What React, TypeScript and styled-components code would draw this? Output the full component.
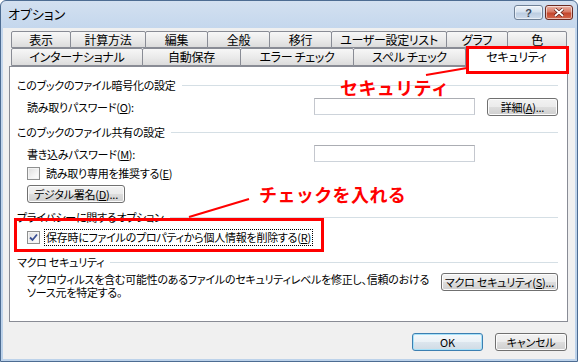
import React from 'react';
import styled, { createGlobalStyle } from 'styled-components';

const UI_FONT = `"Noto Sans CJK JP", "Noto Sans", sans-serif`;

const GlobalStyle = createGlobalStyle`
  html, body { margin: 0; padding: 0; background: #fff; }
  body { font-family: ${UI_FONT}; font-size: 12px; color: #000; }
  * { box-sizing: border-box; }
`;

const Window = styled.div`
  position: relative;
  width: 578px;
  height: 362px;
  display: flex;
  flex-direction: column;
  background: linear-gradient(180deg, #d3e0f0 0px, #c4d7ed 28px, #bcd2ea 100%);
  border: 1px solid #4d6c92;
  border-radius: 6px 6px 0 0;
  overflow: hidden;
  font-family: ${UI_FONT};
  font-size: 11px;
  letter-spacing: -0.25px;
  font-feature-settings: "palt";
`;

const TitleBar = styled.div`
  height: 27px;
  display: flex;
  align-items: flex-start;
  padding: 4px 4px 0 7px;
`;

const Title = styled.div`
  flex: 1;
  font-size: 13px;
  letter-spacing: 0;
  line-height: 18px;
  color: #000;
`;

const CaptionButton = styled.div<{ $w: number; $close?: boolean }>`
  width: ${p => p.$w}px;
  height: 15px;
  margin-left: 2px;
  border: 1px solid ${p => (p.$close ? '#6b2a21' : '#6f8197')};
  border-radius: 3px;
  display: flex;
  align-items: center;
  justify-content: center;
  background: ${p =>
    p.$close
      ? 'linear-gradient(180deg, #eab1a4 0%, #d87a64 45%, #c4462c 55%, #d5694e 100%)'
      : 'linear-gradient(180deg, #eef3f9 0%, #d6e2ef 45%, #bccde1 55%, #cfdcec 100%)'};
  box-shadow: inset 0 0 0 1px rgba(255, 255, 255, 0.55);
  color: #3a4656;
  font-family: "Liberation Sans", Arial, sans-serif;
  font-weight: bold;
  font-size: 11px;
`;

const Body = styled.div`
  flex: 1;
  margin: 0 2px 2px 2px;
  background: #f0f0f0;
  padding: 3px 7px 8px 6px;
  display: flex;
  flex-direction: column;
`;

const TabRow = styled.div<{ $h: number }>`
  display: flex;
  height: ${p => p.$h}px;
  margin-left: 2px;
  align-items: flex-start;
`;

const Tab = styled.div<{ $w: number; $active?: boolean }>`
  position: relative;
  width: ${p => p.$w}px;
  height: ${p => (p.$active ? '21px' : '100%')};
  margin-top: ${p => (p.$active ? -2 : 0)}px;
  z-index: ${p => (p.$active ? 2 : 0)};
  border: 1px solid #898c95;
  border-bottom: ${p => (p.$active ? 'none' : '1px solid #898c95')};
  border-radius: 2px 2px 0 0;
  background: ${p =>
    p.$active ? '#ffffff' : 'linear-gradient(180deg, #f7f7f7 0%, #ebebeb 50%, #dcdcdc 100%)'};
  display: flex;
  align-items: center;
  justify-content: center;
  white-space: nowrap;
  font-size: 12px;
  letter-spacing: -0.3px;
  line-height: 14px;
  & + & {
    margin-left: -1px;
  }
`;

const Panel = styled.div`
  height: 256px;
  border: 1px solid #898c95;
  background: #fff;
  padding: 5px 9px 0 7px;
  display: flex;
  flex-direction: column;
`;

const GroupHeading = styled.div<{ $mt: number }>`
  display: flex;
  align-items: center;
  height: 16px;
  margin-top: ${p => p.$mt}px;
  gap: 6px;
  white-space: nowrap;
  &::after {
    content: '';
    flex: 1;
    height: 1px;
    background: #d5dfe5;
  }
`;

const Indented = styled.div<{ $mt: number; $h: number }>`
  margin-left: 10px;
  margin-top: ${p => p.$mt}px;
  height: ${p => p.$h}px;
  display: flex;
  align-items: center;
`;

const PasswordRow = styled.div`
  margin-left: 10px;
  margin-top: 4px;
  height: 19px;
  display: grid;
  grid-template-columns: 1fr 161px 71px;
  column-gap: 12px;
  align-items: center;
`;

const TextBox = styled.div`
  height: 17px;
  border: 1px solid #abadb3;
  border-left-color: #c4c7ce;
  border-right-color: #c4c7ce;
  border-bottom-color: #cdd3da;
  background: #fff;
`;

const PushButton = styled.div<{ $w: number; $default?: boolean }>`
  flex: none;
  width: ${p => p.$w}px;
  height: 18px;
  border: 1px solid ${p => (p.$default ? '#3c7fb1' : '#707070')};
  border-radius: 3px;
  background: ${p =>
    p.$default
      ? 'linear-gradient(180deg, #f4f9fc 0%, #eaf1f6 50%, #dce6ee 51%, #d0dbe4 100%)'
      : 'linear-gradient(180deg, #f2f2f2 0%, #ebebeb 50%, #dddddd 51%, #cfcfcf 100%)'};
  box-shadow: inset 0 0 0 1px ${p => (p.$default ? '#a6e1f9' : '#fcfcfc')};
  display: flex;
  align-items: center;
  justify-content: center;
  white-space: nowrap;
  line-height: 14px;
`;

const CheckRow = styled.div<{ $mt: number; $h: number }>`
  margin-left: 10px;
  margin-top: ${p => p.$mt}px;
  height: ${p => p.$h}px;
  display: flex;
  align-items: center;
  gap: 3px;
`;

const CheckBox = styled.span`
  width: 13px;
  height: 13px;
  flex: none;
  border: 1px solid #8e8f8f;
  background: linear-gradient(135deg, #dcdcdc 0%, #f4f4f4 60%, #ffffff 100%);
  box-shadow: inset 0 0 0 1px #f4f4f4;
  display: flex;
  align-items: center;
  justify-content: center;
  margin-right: 1px;
`;

const CheckLabel = styled.span<{ $focus?: boolean }>`
  white-space: nowrap;
  line-height: 15px;
  padding: 0 1px;
  border: 1px dotted ${p => (p.$focus ? '#000' : 'transparent')};
`;

const MacroRow = styled.div`
  margin-left: 10px;
  margin-top: 3px;
  display: flex;
  justify-content: space-between;
  align-items: flex-start;
`;

const Description = styled.div`
  white-space: nowrap;
  line-height: 13px;
`;

const DialogButtons = styled.div`
  margin-top: 11px;
  display: flex;
  justify-content: flex-end;
  gap: 12px;
  padding-right: 1px;
`;

const Callout = styled.div<{ $x: number; $y: number }>`
  position: absolute;
  left: ${p => p.$x}px;
  top: ${p => p.$y}px;
  color: #ff0000;
  font-size: 18px;
  font-weight: bold;
  line-height: 18px;
  letter-spacing: 0.4px;
  font-feature-settings: normal;
  white-space: nowrap;
`;

const Highlight = styled.div<{ $x: number; $y: number; $w: number; $h: number }>`
  position: absolute;
  left: ${p => p.$x}px;
  top: ${p => p.$y}px;
  width: ${p => p.$w}px;
  height: ${p => p.$h}px;
  border: 3px solid #ff0000;
  z-index: 5;
`;

const Leaders = styled.svg`
  position: absolute;
  left: 0;
  top: 0;
  z-index: 6;
  pointer-events: none;
`;

const row1: [string, number][] = [
  ['表示', 60],
  ['計算方法', 76],
  ['編集', 63],
  ['全般', 63],
  ['移行', 63],
  ['ユーザー設定リスト', 116],
  ['グラフ', 62],
  ['色', 60],
];

const row2: [string, number][] = [
  ['インターナショナル', 132],
  ['自動保存', 99],
  ['エラー チェック', 114],
  ['スペル チェック', 113],
  ['セキュリティ', 103],
];

const Check = () => (
  <svg width="9" height="9" viewBox="0 0 9 9">
    <path d="M1 4.5 L3.5 7 L8 1.5" fill="none" stroke="#3a4f93" strokeWidth="1.8" />
  </svg>
);

const App: React.FC = () => {
  return (
    <>
      <GlobalStyle />
      <Window>
        <TitleBar>
          <Title>オプション</Title>
          <CaptionButton $w={29}>?</CaptionButton>
          <CaptionButton $w={28} $close>
            <svg width="12" height="9" viewBox="0 0 12 9">
              <path d="M2 1 L10 8 M10 1 L2 8" stroke="#5a1a12" strokeWidth="3.2" />
              <path d="M2 1 L10 8 M10 1 L2 8" stroke="#ffffff" strokeWidth="1.8" />
            </svg>
          </CaptionButton>
        </TitleBar>

        <Body>
          <TabRow $h={17}>
            {row1.map(([label, w]) => (
              <Tab key={label} $w={w}>{label}</Tab>
            ))}
          </TabRow>
          <TabRow $h={18}>
            {row2.map(([label, w]) => (
              <Tab key={label} $w={w} $active={label === 'セキュリティ'}>{label}</Tab>
            ))}
          </TabRow>

          <Panel>
            <GroupHeading $mt={5}>このブックのファイル暗号化の設定</GroupHeading>
            <PasswordRow>
              <span>読み取りパスワード(<u>O</u>):</span>
              <TextBox />
              <PushButton $w={71}>詳細(<u>A</u>)...</PushButton>
            </PasswordRow>

            <GroupHeading $mt={8}>このブックのファイル共有の設定</GroupHeading>
            <PasswordRow>
              <span>書き込みパスワード(<u>M</u>):</span>
              <TextBox />
              <span />
            </PasswordRow>
            <CheckRow $mt={2} $h={16}>
              <CheckBox />
              <CheckLabel>読み取り専用を推奨する(<u>E</u>)</CheckLabel>
            </CheckRow>
            <Indented $mt={4} $h={18}>
              <PushButton $w={98}>デジタル署名(<u>D</u>)...</PushButton>
            </Indented>

            <GroupHeading $mt={6}>プライバシーに関するオプション</GroupHeading>
            <CheckRow $mt={4} $h={17}>
              <CheckBox>
                <Check />
              </CheckBox>
              <CheckLabel $focus>保存時にファイルのプロパティから個人情報を削除する(<u>R</u>)</CheckLabel>
            </CheckRow>

            <GroupHeading $mt={8}>マクロ セキュリティ</GroupHeading>
            <MacroRow>
              <Description>
                マクロウィルスを含む可能性のあるファイルのセキュリティレベルを修正し、信頼のおける
                <br />
                ソース元を特定する。
              </Description>
              <PushButton $w={117}>マクロ セキュリティ(<u>S</u>)...</PushButton>
            </MacroRow>
          </Panel>

          <DialogButtons>
            <PushButton $w={71} $default>OK</PushButton>
            <PushButton $w={72}>キャンセル</PushButton>
          </DialogButtons>
        </Body>

        <Highlight $x={465} $y={45} $w={103} $h={28} />
        <Highlight $x={13} $y={217} $w={310} $h={34} />
        <Callout $x={339} $y={77}>セキュリティ</Callout>
        <Callout $x={258} $y={184}>チェックを入れる</Callout>
        <Leaders width="578" height="362" viewBox="0 0 578 362">
          <line x1="425" y1="74" x2="466" y2="67" stroke="#ff0000" strokeWidth="2" />
          <line x1="248" y1="198" x2="188" y2="216" stroke="#ff0000" strokeWidth="2" />
        </Leaders>
      </Window>
    </>
  );
};

export default App;
